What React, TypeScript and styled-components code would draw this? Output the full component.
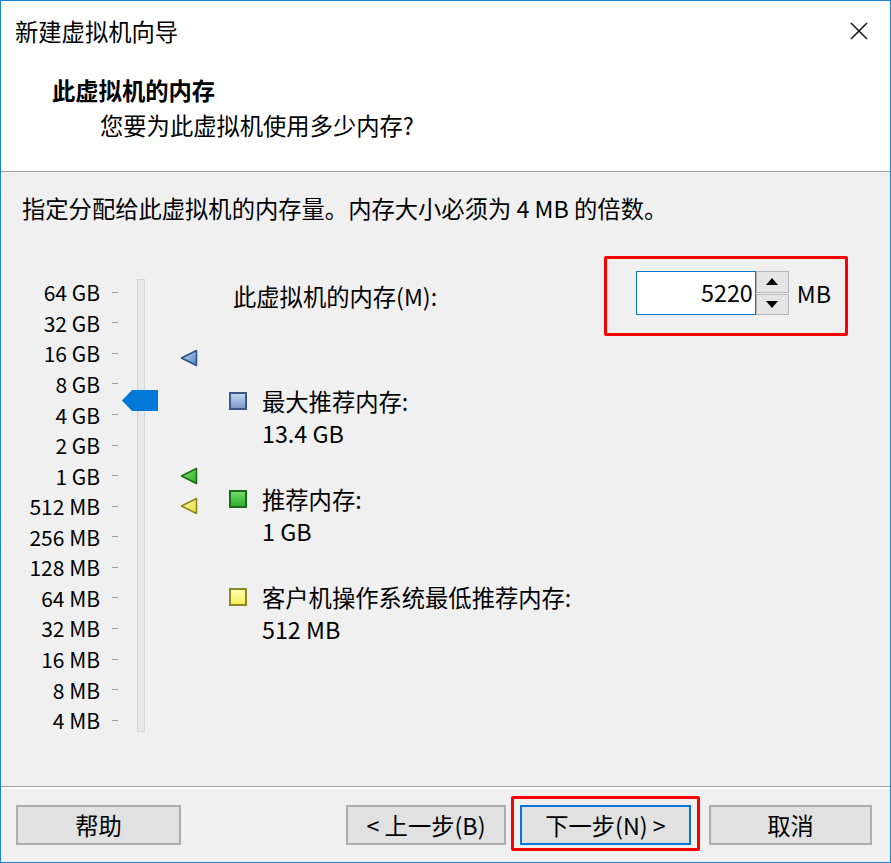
import React from 'react'
import styled, { createGlobalStyle } from 'styled-components'

const GlobalStyle = createGlobalStyle`
  html, body {
    margin: 0;
    padding: 0;
    background: #ffffff;
  }

  body {
    font-family: 'Noto Sans CJK SC', 'Noto Sans', sans-serif;
    color: #000000;
  }
`

const ROW = 30.57
const SCALE = ['64 GB', '32 GB', '16 GB', '8 GB', '4 GB', '2 GB', '1 GB', '512 MB', '256 MB', '128 MB', '64 MB', '32 MB', '16 MB', '8 MB', '4 MB']

// position on the scale for a value in MB (64 GB at the top)
const scaleY = (mb: number) => (16 - Math.log2(mb)) * ROW + ROW / 2

const Window = styled.div`
  width: 891px;
  height: 863px;
  box-sizing: border-box;
  border: 1px solid #1883d7;
  display: flex;
  flex-direction: column;
  background: #f0f0f0;
  font-size: 23.3px;
`

const TitleBar = styled.div`
  height: 59px;
  flex: none;
  background: #ffffff;
  display: flex;
  align-items: center;
  justify-content: space-between;
  padding: 0 22px 0 14px;
`

const Header = styled.div`
  height: 112px;
  flex: none;
  background: #ffffff;
  border-bottom: 1px solid #a0a0a0;
  padding: 14px 0 0 51px;
  box-sizing: border-box;

  .title {
    font-weight: 700;
    line-height: 32px;
  }

  .subtitle {
    line-height: 32px;
    margin: 3px 0 0 48px;
  }
`

const Body = styled.div`
  flex: 1;
  padding: 21px 0 0 21px;

  .intro {
    line-height: 30px;
  }
`

const Main = styled.div`
  display: flex;
  margin-top: 54px;
`

const SliderColumn = styled.div`
  position: relative;
  width: 207px;
  flex: none;
  display: flex;
  align-items: flex-start;
`

const Scale = styled.div`
  display: flex;
  flex-direction: column;
`

const ScaleRow = styled.div`
  height: ${ROW}px;
  display: flex;
  align-items: center;

  .label {
    width: 78px;
    text-align: right;
    font-size: 21px;
    line-height: 26px;
    white-space: nowrap;
  }

  .tick {
    width: 6px;
    height: 1px;
    margin-left: 12px;
    background: #a0a0a0;
  }
`

const Track = styled.div`
  width: 6px;
  height: 451px;
  margin: 2px 0 0 19px;
  border: 1px solid #d6d6d6;
  background: #e7eaea;
`

const Thumb = styled.svg`
  position: absolute;
  left: 100px;
  width: 36px;
  height: 21px;
`

const Marker = styled.svg`
  position: absolute;
  left: 158px;
  width: 18px;
  height: 18px;
`

const Details = styled.div`
  flex: 1;
  display: flex;
  flex-direction: column;
  margin-top: -21px;
`

const MemoryRow = styled.div`
  display: flex;
  align-items: center;
  justify-content: space-between;
  padding: 0 42px 0 4px;
`

const Highlight = styled.div`
  border: 3px solid #ff0000;
  border-radius: 2px;
  display: flex;
  align-items: center;
  padding: 12px 14px 18px 29px;
`

const NumberInput = styled.div`
  width: 116px;
  height: 42px;
  background: #ffffff;
  border: 1px solid #0078d7;
  display: flex;
  align-items: center;
  justify-content: flex-end;
  padding-right: 2px;
  line-height: 1;
`

const Spinner = styled.div`
  width: 33px;
  height: 44px;
  display: flex;
  flex-direction: column;
  gap: 1px;
  margin-right: 8px;
`

const SpinButton = styled.div`
  flex: 1;
  background: #e5e5e5;
  border: 1px solid #b5b5b5;
  display: flex;
  align-items: center;
  justify-content: center;
`

const Legend = styled.div`
  display: flex;
  flex-direction: column;
  gap: 34px;
  margin-top: 49px;
`

const LegendItem = styled.div`
  display: flex;
  align-items: flex-start;

  .lines {
    display: flex;
    flex-direction: column;
    margin-left: 15px;
    line-height: 32px;
  }
`

const Swatch = styled.div<{ $edge: string; $top: string; $bottom: string }>`
  width: 14px;
  height: 14px;
  margin-top: 7px;
  border: 2px solid ${(p) => p.$edge};
  background: linear-gradient(${(p) => p.$top}, ${(p) => p.$bottom});
`

const Footer = styled.div`
  height: 75px;
  flex: none;
  border-top: 1px solid #a0a0a0;
  box-shadow: inset 0 2px 0 #ffffff;
  display: flex;
  align-items: center;
  padding: 0 18px 0 15px;
`

const Spacer = styled.div`
  flex: 1;
`

const Button = styled.div<{ $width: number; $focused?: boolean }>`
  width: ${(p) => p.$width}px;
  height: 40px;
  box-sizing: border-box;
  background: #e1e1e1;
  border: 2px solid ${(p) => (p.$focused ? '#0078d7' : '#adadad')};
  display: flex;
  align-items: center;
  justify-content: center;
`

const FocusFrame = styled.div`
  border: 3px solid #ff0000;
  border-radius: 2px;
  padding: 6px 6px 3px 6px;
  margin: -2px 9px 0 5px;
`

const markers = [
  { mb: 13.4 * 1024, top: '#c9dbf2', bottom: '#4f7fc4', edge: '#2c4f86', shift: 3 },
  { mb: 1024, top: '#9bee8f', bottom: '#1fa81f', edge: '#126c12', shift: 0 },
  { mb: 512, top: '#fffdc0', bottom: '#e3dc32', edge: '#8a8618', shift: 0 },
]

const legend = [
  { label: '最大推荐内存:', value: '13.4 GB', edge: '#3a5887', top: '#c3d5ee', bottom: '#7d9ccb' },
  { label: '推荐内存:', value: '1 GB', edge: '#196a19', top: '#6fdc66', bottom: '#2cb02c' },
  { label: '客户机操作系统最低推荐内存:', value: '512 MB', edge: '#8a8823', top: '#ffffb4', bottom: '#f3ee5c' },
]

const App = () => {
  const memory = 5220

  return (
    <>
      <GlobalStyle />
      <Window>
        <TitleBar>
          <span>新建虚拟机向导</span>
          <svg width="18" height="18" viewBox="0 0 18 18">
            <path d="M1 1 L17 17 M17 1 L1 17" stroke="#1a1a1a" strokeWidth="1.6" fill="none" />
          </svg>
        </TitleBar>

        <Header>
          <div className="title">此虚拟机的内存</div>
          <div className="subtitle">您要为此虚拟机使用多少内存?</div>
        </Header>

        <Body>
          <div className="intro">指定分配给此虚拟机的内存量。内存大小必须为 4 MB 的倍数。</div>

          <Main>
            <SliderColumn>
              <Scale>
                {SCALE.map((label) => (
                  <ScaleRow key={label}>
                    <span className="label">{label}</span>
                    <span className="tick" />
                  </ScaleRow>
                ))}
              </Scale>
              <Track />

              <Thumb viewBox="0 0 36 21" style={{ top: scaleY(memory) - 10.5 - 3 }}>
                <path d="M10 0 H36 V21 H10 L0 10.5 Z" fill="#0078d7" />
              </Thumb>

              {markers.map((m, i) => (
                <Marker key={m.mb} viewBox="0 0 18 18" style={{ top: scaleY(m.mb) - 9 - m.shift }}>
                  <defs>
                    <linearGradient id={`mk${i}`} x1="0" y1="0" x2="1" y2="1">
                      <stop offset="0" stopColor={m.top} />
                      <stop offset="1" stopColor={m.bottom} />
                    </linearGradient>
                  </defs>
                  <polygon points="1.5,9 16.5,1.5 16.5,16.5" fill={`url(#mk${i})`} stroke={m.edge} strokeWidth="1.5" strokeLinejoin="round" />
                </Marker>
              ))}
            </SliderColumn>

            <Details>
              <MemoryRow>
                <span>此虚拟机的内存(M):</span>
                <Highlight>
                  <NumberInput>{memory}</NumberInput>
                  <Spinner>
                    <SpinButton>
                      <svg width="12" height="7" viewBox="0 0 12 7">
                        <path d="M6 0 L12 7 H0 Z" fill="#000000" />
                      </svg>
                    </SpinButton>
                    <SpinButton>
                      <svg width="12" height="7" viewBox="0 0 12 7">
                        <path d="M0 0 H12 L6 7 Z" fill="#000000" />
                      </svg>
                    </SpinButton>
                  </Spinner>
                  <span>MB</span>
                </Highlight>
              </MemoryRow>

              <Legend>
                {legend.map((item) => (
                  <LegendItem key={item.label}>
                    <Swatch $edge={item.edge} $top={item.top} $bottom={item.bottom} />
                    <div className="lines">
                      <span>{item.label}</span>
                      <span>{item.value}</span>
                    </div>
                  </LegendItem>
                ))}
              </Legend>
            </Details>
          </Main>
        </Body>

        <Footer>
          <Button $width={165}>帮助</Button>
          <Spacer />
          <Button $width={160}>&lt; 上一步(B)</Button>
          <FocusFrame>
            <Button $width={171} $focused>下一步(N) &gt;</Button>
          </FocusFrame>
          <Button $width={163}>取消</Button>
        </Footer>
      </Window>
    </>
  )
}

export default App
